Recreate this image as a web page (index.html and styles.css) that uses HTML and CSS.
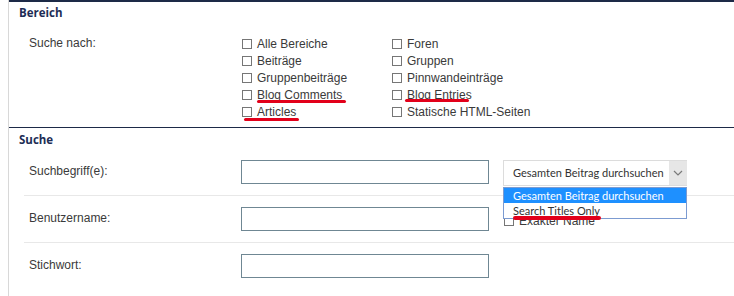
FILE: index.html
```html
<!DOCTYPE html>
<html lang="de">
<head>
<meta charset="utf-8">
<title>Suche</title>
<link rel="stylesheet" href="styles.css">
</head>
<body>
<div class="page">
  <section class="block block-area">
    <h2 class="block-title">Bereich</h2>
    <div class="area-row">
      <div class="row-label">Suche nach:</div>
      <div class="checks">
        <div class="check-col">
          <div class="check"><span class="box"></span><span>Alle Bereiche</span></div>
          <div class="check"><span class="box"></span><span>Beiträge</span></div>
          <div class="check"><span class="box"></span><span>Gruppenbeiträge</span></div>
          <div class="check"><span class="box"></span><span>Blog Comments</span><span class="mark mark-comments"></span></div>
          <div class="check"><span class="box"></span><span>Articles</span><span class="mark mark-articles"></span></div>
        </div>
        <div class="check-col">
          <div class="check"><span class="box"></span><span>Foren</span></div>
          <div class="check"><span class="box"></span><span>Gruppen</span></div>
          <div class="check"><span class="box"></span><span>Pinnwandeinträge</span></div>
          <div class="check"><span class="box"></span><span>Blog Entries</span><span class="mark mark-entries"></span></div>
          <div class="check"><span class="box"></span><span>Statische HTML-Seiten</span></div>
        </div>
      </div>
    </div>
  </section>
  <section class="block block-search">
    <h2 class="block-title">Suche</h2>
    <div class="field-row">
      <div class="row-label field-label">Suchbegriff(e):</div>
      <div class="text-input"></div>
      <div class="select-wrap">
        <div class="select">
          <span class="select-text">Gesamten Beitrag durchsuchen</span>
          <span class="select-arrow">
            <svg width="10" height="6" viewBox="0 0 10 6"><path d="M1 1 L5 5 L9 1" fill="none" stroke="#7a7a7a" stroke-width="1.2"/></svg>
          </span>
        </div>
        <div class="dropdown">
          <div class="option option-active">Gesamten Beitrag durchsuchen</div>
          <div class="option">Search Titles Only<span class="mark mark-titles"></span></div>
        </div>
      </div>
    </div>
    <div class="field-row">
      <div class="row-label field-label">Benutzername:</div>
      <div class="text-input"></div>
      <div class="exact"><span class="box"></span><span>Exakter Name</span></div>
    </div>
    <div class="field-row field-row-last">
      <div class="row-label field-label">Stichwort:</div>
      <div class="text-input"></div>
    </div>
  </section>
</div>
</body>
</html>
```
FILE: styles.css
```css
html, body {
  margin: 0;
  padding: 0;
  background: #ffffff;
}

body {
  font-family: "Liberation Sans", Arial, sans-serif;
  font-size: 12px;
  color: #3a3a3a;
  height: 296px;
  overflow: hidden;
}

.page {
  margin-left: 8px;
  border-left: 1px solid #d8d8d8;
  height: 296px;
}

.block-area {
  border-top: 2px solid #1d2a47;
  padding-bottom: 7px;
}

.block-search {
  border-top: 1px solid #1d2a47;
}

.block-title {
  margin: 0;
  padding: 1px 0 0 10px;
  font-family: "Open Sans", "DejaVu Sans", sans-serif;
  font-weight: 700;
  font-size: 11.5px;
  line-height: 20px;
  color: #1d2d55;
}

.block-search .block-title {
  padding-top: 3px;
  line-height: 18px;
}

.area-row {
  display: flex;
  margin-top: 12px;
  margin-left: 15px;
}

.row-label {
  width: 212px;
  padding-left: 5px;
  line-height: 17px;
  color: #3a3a3a;
  flex: none;
}

.checks {
  display: flex;
}

.check-col {
  width: 150px;
  display: flex;
  flex-direction: column;
}

.check {
  position: relative;
  display: flex;
  align-items: center;
  height: 17px;
  white-space: nowrap;
}

.box {
  display: inline-block;
  width: 10px;
  height: 10px;
  box-sizing: border-box;
  border: 1px solid #767676;
  background: #fff;
  margin: 0 5px 0 1px;
  flex: none;
}

.mark {
  position: absolute;
  height: 3px;
  border-radius: 2px;
  background: #e2001a;
}

.mark-comments {
  left: 16px;
  top: 14px;
  width: 89px;
}

.mark-articles {
  left: 3px;
  top: 15px;
  width: 55px;
}

.mark-entries {
  left: 14px;
  top: 13px;
  width: 64px;
}

.mark-titles {
  left: 9px;
  top: 13px;
  width: 88px;
  height: 4px;
}

.field-row {
  display: flex;
  align-items: flex-start;
  margin-left: 15px;
  padding: 11px 0;
  height: 47px;
  box-sizing: border-box;
  border-bottom: 1px solid #e8e8e8;
}

.field-row-last {
  border-bottom: none;
}

.field-label {
  line-height: 22px;
}

.text-input {
  width: 248px;
  height: 24px;
  box-sizing: border-box;
  border: 1px solid #6f8793;
  background: #fff;
  flex: none;
}

.select-wrap {
  position: relative;
  margin-left: 14px;
  width: 184px;
  flex: none;
}

.select {
  display: flex;
  align-items: stretch;
  height: 26px;
  box-sizing: border-box;
  border: 1px solid #dcdcdc;
  border-right: none;
  background: #fff;
  font-family: Lato, "Open Sans", sans-serif;
  font-size: 11px;
  color: #333;
}

.select-text {
  flex: 1;
  padding-left: 9px;
  line-height: 24px;
  white-space: nowrap;
  overflow: hidden;
}

.select-arrow {
  width: 18px;
  background: #e6e6e6;
  display: flex;
  align-items: center;
  justify-content: center;
}

.dropdown {
  position: absolute;
  top: 27px;
  left: 0;
  width: 184px;
  box-sizing: border-box;
  border: 1px solid #7c9bd1;
  background: #fff;
  z-index: 2;
  font-family: Lato, "Open Sans", sans-serif;
  font-size: 11px;
  color: #333;
}

.option {
  position: relative;
  height: 15px;
  line-height: 15px;
  padding-left: 9px;
  white-space: nowrap;
}

.option-active {
  background: #1e90ff;
  color: #fff;
}

.exact {
  display: flex;
  align-items: center;
  margin-left: 14px;
  height: 24px;
  margin-top: 2px;
  white-space: nowrap;
}
```
